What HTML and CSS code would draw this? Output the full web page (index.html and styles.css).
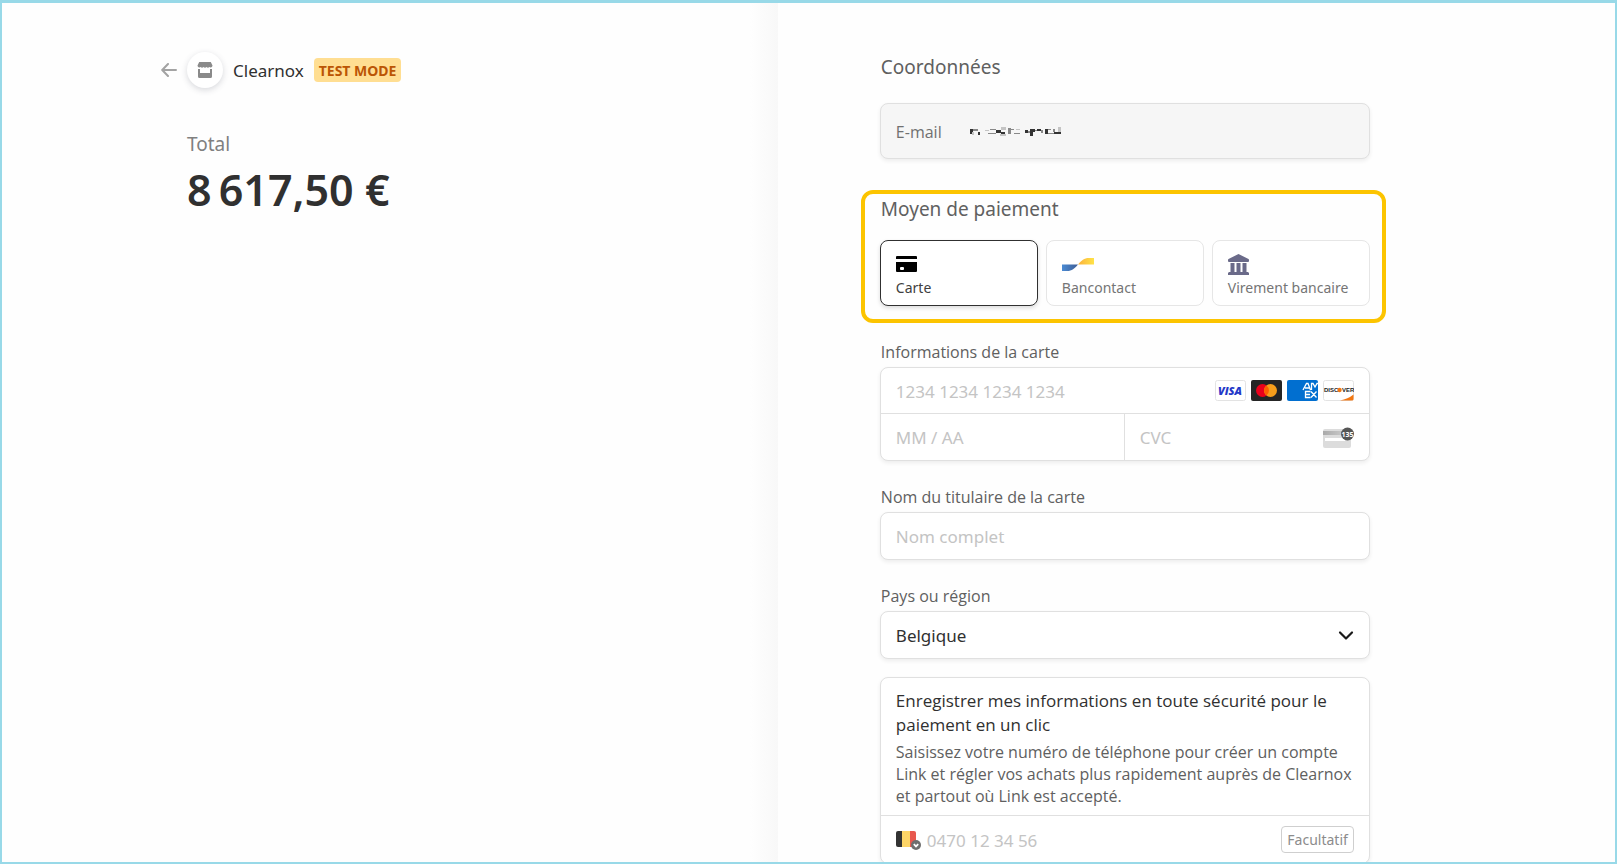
FILE: index.html
```html
<!DOCTYPE html>
<html lang="fr">
<head>
<meta charset="utf-8">
<meta name="viewport" content="width=device-width, initial-scale=1">
<title>Clearnox</title>
<link rel="stylesheet" href="styles.css">
</head>
<body>
<div class="page">
  <section class="summary">
    <header class="merchant">
      <a class="back" href="#" aria-label="Retour">
        <svg width="16" height="14" viewBox="0 0 16 14" fill="none" stroke="#a3a3a3" stroke-width="2" stroke-linecap="round" stroke-linejoin="round"><path d="M7 1 1.200 7 7 13M1.500 7H15"/></svg>
      </a>
      <span class="avatar">
        <svg width="16" height="16" viewBox="0 0 16 16" fill="#8a8a8a"><path d="M2.200 0h11.600L15.500 3.500a2 2 0 0 1-3.100 1.600 2.300 2.300 0 0 1-2.900 0 2.300 2.300 0 0 1-3 0 2.300 2.300 0 0 1-2.900 0A2 2 0 0 1 .500 3.500z"/><path d="M1 7h2v4h10V7h2v7.500a1.500 1.500 0 0 1-1.500 1.500h-11A1.500 1.500 0 0 1 1 14.500z"/></svg>
      </span>
      <span class="merchant-name">Clearnox</span>
      <span class="badge">TEST MODE</span>
    </header>
    <p class="total-label">Total</p>
    <p class="total">8&#8239;617,50&nbsp;€</p>
  </section>

  <main class="payment">
    <form class="form">
      <h2 class="heading">Coordonnées</h2>
      <div class="box email">
        <span>E-mail</span>
        <svg width="92" height="12" viewBox="0 0 92 12" role="img" aria-label="Adresse masquée">
          <g fill="#333"><path d="M0 3h3v5H0zM8 6h2v3H8zM26 4h5v3h-5zM31 6h4v2h-4zM55 4h3v3h-3zM60 3h5v3h-5zM60 6h3v4h-3zM67 3h4v2h-4zM75 3h3v5h-3zM84 6h7v2h-7z"/></g>
          <g fill="#888"><path d="M3 3h5v2H3zM20 3h6v1h-6zM18 7h8v1h-8zM38 2h3v6h-3zM41 3h3v1h-3zM44 7h6v1h-6zM58 5h2v2h-2zM65 4h2v1h-2zM71 4h2v3h-2zM78 3h3v1h-3zM78 7h6v1h-6zM83 3h2v3h-2z"/></g>
          <g fill="#c4c4c4"><path d="M2 6h2v3H2zM15 4h4v1h-4zM31 1h5v3h-5zM30 8h6v2h-6zM46 3h4v1h-4zM88 1h3v5h-3z"/></g>
        </svg>
      </div>

      <section class="methods">
        <h2 class="heading">Moyen de paiement</h2>
        <div class="tabs" role="tablist">
          <button class="tab selected" type="button" role="tab" aria-selected="true">
            <svg width="21" height="21" viewBox="0 0 21 21"><path d="M1 2h19a1 1 0 0 1 1 1v2H0V3a1 1 0 0 1 1-1zM0 8h21v9a1 1 0 0 1-1 1H1a1 1 0 0 1-1-1z"/><rect x="4" y="13" width="4" height="3" rx="1" fill="#fff"/></svg>
            <span>Carte</span>
          </button>
          <button class="tab" type="button" role="tab" aria-selected="false">
            <svg width="32" height="21" viewBox="0 0 32 21"><defs><linearGradient id="blue"><stop stop-color="#4a8bd4"/><stop offset="1" stop-color="#3f5d94"/></linearGradient><linearGradient id="yellow"><stop stop-color="#fbb13c"/><stop offset="1" stop-color="#ffe347"/></linearGradient></defs><path fill="url(#blue)" d="M0 10.500h16C12.500 14.500 10 17 5 17H0z"/><path fill="url(#yellow)" d="M16 10.500C19.500 6.500 22 4 27 4h5v6.500z"/></svg>
            <span>Bancontact</span>
          </button>
          <button class="tab" type="button" role="tab" aria-selected="false">
            <svg width="21" height="21" viewBox="0 0 21 21" fill="#6a6a89"><path d="M10.500 0 20.500 5q.500.300.500 1v1q0 1-1 1H1Q0 8 0 7V6q0-.700.500-1zM2.500 9h4v9h-4zM8.500 9h4v9h-4zM14.500 9h4v9h-4zM1 18h19l1 1v2H0v-2z"/></svg>
            <span>Virement bancaire</span>
          </button>
        </div>
      </section>

      <fieldset class="field first">
        <legend class="label">Informations de la carte</legend>
        <div class="box card">
          <div class="cell number">
            <input class="input" type="text" aria-label="Numéro de carte" placeholder="1234 1234 1234 1234">
            <div class="brands">
              <svg width="31" height="21" viewBox="0 0 31 21"><rect x=".5" y=".5" width="30" height="20" rx="2" fill="#fff" stroke="#e3e3e3"/><text class="visa" x="15" y="15" text-anchor="middle">VISA</text></svg>
              <svg width="31" height="21" viewBox="0 0 31 21"><rect width="31" height="21" rx="2" fill="#252525"/><circle cx="11.500" cy="10.500" r="6.500" fill="#eb001b"/><circle cx="19.500" cy="10.500" r="6.500" fill="#f79e1b"/><path fill="#ff5f00" d="M15.500 5.400a6.500 6.500 0 0 1 0 10.200 6.500 6.500 0 0 1 0-10.200z"/></svg>
              <svg width="31" height="21" viewBox="0 0 31 21"><rect width="31" height="21" rx="2" fill="#016fd0"/><g fill="none" stroke="#fff" stroke-width="1.300"><path d="m16 10 3.500-6.500h1.500L23.500 10M18 8h4.500M24.500 10V3.500h1.500l2 3.500 2-3.500h1M23.500 11.500h-5v6h5M18.500 14.500h4.500M24 11.500l5.500 6M29.500 11.500l-5.500 6"/></g></svg>
              <svg width="31" height="21" viewBox="0 0 31 21"><rect x=".5" y=".5" width="30" height="20" rx="2" fill="#fff" stroke="#e3e3e3"/><path fill="#f27712" d="M17 20.500q8-1.500 13.500-6v4.500q0 1.500-1.500 1.500z"/><text class="discover" x="1" y="12">DISC</text><circle cx="16.500" cy="10" r="2.200" fill="#f27712"/><text class="discover" x="19" y="12">VER</text></svg>
            </div>
          </div>
          <div class="cell expiry"><input class="input" type="text" aria-label="Expiration" placeholder="MM / AA"></div>
          <div class="cell cvc">
            <input class="input" type="text" aria-label="CVC" placeholder="CVC">
            <svg width="31" height="21" viewBox="0 0 31 21"><defs><linearGradient id="strip"><stop stop-color="#aaa"/><stop offset="1" stop-color="#d4d4d4"/></linearGradient></defs><rect y="2" width="28" height="19" rx="2" fill="#dcdcdc"/><path fill="url(#strip)" d="M0 4h28v4H0z"/><path fill="#fff" d="M2 11h20v3H2z"/><circle cx="24.500" cy="7" r="6.500" fill="#555"/><text class="digits" x="24.500" y="10" text-anchor="middle">135</text></svg>
          </div>
        </div>
      </fieldset>

      <div class="field">
        <label class="label" for="name">Nom du titulaire de la carte</label>
        <div class="box control"><input class="input" id="name" type="text" placeholder="Nom complet"></div>
      </div>

      <div class="field">
        <label class="label" for="country">Pays ou région</label>
        <div class="box control">
          <select class="input select" id="country"><option>Belgique</option></select>
          <svg width="16" height="16" viewBox="0 0 16 16" fill="none" stroke="#1a1a1a" stroke-width="2.200" stroke-linecap="round" stroke-linejoin="round"><path d="m2 5.500 6 6 6-6"/></svg>
        </div>
      </div>

      <div class="box link">
        <div class="link-text">
          <h3 class="link-title">Enregistrer mes informations en toute sécurité pour le paiement en un clic</h3>
          <p class="link-description">Saisissez votre numéro de téléphone pour créer un compte Link et régler vos achats plus rapidement auprès de Clearnox et partout où Link est accepté.</p>
        </div>
        <div class="phone">
          <button class="flag" type="button" aria-label="Belgique">
            <svg width="25" height="21" viewBox="0 0 25 21"><clipPath id="flag"><rect y="2" width="20" height="16" rx="2"/></clipPath><g clip-path="url(#flag)"><path fill="#333" d="M0 0h7v20H0z"/><path fill="#fdd567" d="M6 0h8v20H6z"/><path fill="#e8584e" d="M14 0h8v20h-8z"/></g><circle cx="20" cy="16" r="5" fill="#6e6e6e"/><path d="m17.800 15.200 2.200 2.200 2.200-2.200" fill="none" stroke="#fff" stroke-width="1.800"/></svg>
          </button>
          <input class="input" type="tel" aria-label="Téléphone" placeholder="0470 12 34 56">
          <span class="optional">Facultatif</span>
        </div>
      </div>
    </form>
  </main>
</div>
</body>
</html>
```
FILE: styles.css
```css
* {
  box-sizing: border-box;
}

body {
  margin: 0;
  background: #fefefe;
  color: #303030;
  font-family: "Noto Sans", "Open Sans", sans-serif;
}

h2, h3, p {
  margin: 0;
  font-weight: 400;
}

svg {
  display: block;
  flex: none;
}

.page {
  display: grid;
  grid-template-columns: 481fr 519fr;
  height: 100vh;
  overflow: hidden;
  border: 2px solid #98d9e8;
  border-top-width: 3px;
}

.summary {
  padding: 49px 24px 0 159px;
  background: linear-gradient(to left, #f8f8f8, #fefefe 28px);
}

.merchant {
  display: flex;
  align-items: center;
}

.avatar {
  display: grid;
  place-items: center;
  width: 36px;
  height: 36px;
  margin: 0 10px;
  border-radius: 50%;
  background: #fff;
  box-shadow: 0 2px 6px rgba(60, 66, 87, 0.2);
}

.merchant-name {
  margin-right: 10px;
  padding-top: 2px;
  font-size: 17px;
  line-height: 24px;
}

.badge {
  padding: 1px 5px 0;
  border-radius: 4px;
  background: #ffde92;
  color: #bb5504;
  font-size: 14px;
  font-weight: 700;
  line-height: 23px;
}

.total-label {
  margin: 42px 0 0 26px;
  color: #808080;
  font-size: 19px;
  line-height: 28px;
}

.total {
  margin-left: 26px;
  font-size: 43px;
  font-weight: 600;
  line-height: 64px;
}

.payment {
  padding: 50px 24px 0 102px;
}

.form {
  max-width: 490px;
}

.heading {
  padding-left: 1px;
  color: #606060;
  font-size: 19px;
  line-height: 28px;
}

.box {
  border: 1px solid #e0e0e0;
  border-radius: 8px;
  background: #fff;
  box-shadow: 0 2px 4px rgba(0, 0, 0, 0.07);
}

.email {
  display: flex;
  align-items: center;
  gap: 28px;
  height: 56px;
  margin-top: 22px;
  padding: 2px 15px 0;
  background: #f6f6f6;
  color: #707070;
  font-family: "Open Sans", "Noto Sans", sans-serif;
  font-size: 16px;
}

.methods {
  margin: 31px -16px 0 -19px;
  padding: 1px 12px 13px 15px;
  border: 4px solid #fcc400;
  border-radius: 12px;
}

.tabs {
  display: grid;
  grid-template-columns: repeat(3, 1fr);
  gap: 8px;
  margin-top: 17px;
}

.tab {
  display: flex;
  flex-direction: column;
  align-items: flex-start;
  gap: 2px;
  height: 66px;
  padding: 13px 15px 0;
  border: 1px solid #e6e6e6;
  border-radius: 8px;
  background: #fff;
  color: #757575;
  font: 14px/22px "Noto Sans", "Open Sans", sans-serif;
  white-space: nowrap;
}

.tab.selected {
  border-color: #303030;
  color: #404040;
  box-shadow: 0 2px 4px rgba(0, 0, 0, 0.14);
}

.field {
  min-width: 0;
  margin: 21px 0 0;
  padding: 0;
  border: 0;
}

.first {
  margin-top: 14px;
}

.label {
  display: block;
  padding: 0 1px;
  color: #606060;
  font-family: "Open Sans", "Noto Sans", sans-serif;
  font-size: 16px;
  line-height: 30px;
}

.card {
  display: grid;
  grid-template-columns: 1fr 1fr;
}

.cell {
  display: flex;
  align-items: center;
  min-width: 0;
  height: 46px;
  padding: 0 15px;
}

.number {
  grid-column: 1 / 3;
  border-bottom: 1px solid #e0e0e0;
}

.expiry {
  border-right: 1px solid #e0e0e0;
}

.brands {
  display: flex;
  gap: 5px;
}

.input {
  flex: 1;
  min-width: 0;
  height: 44px;
  padding: 1px 0 0;
  border: 0;
  outline: 0;
  background: transparent;
  color: #303030;
  font: 17px "Noto Sans", "Open Sans", sans-serif;
}

.input::placeholder {
  color: #c4c4c4;
  opacity: 1;
}

.select {
  appearance: none;
}

.control {
  display: flex;
  align-items: center;
  height: 48px;
  padding: 0 15px;
}

.link {
  margin-top: 18px;
}

.link-text {
  padding: 11px 8px 8px 15px;
  font-family: "Open Sans", "Noto Sans", sans-serif;
}

.link-title {
  font-size: 17px;
  line-height: 24px;
}

.link-description {
  margin-top: 4px;
  color: #606060;
  font-size: 16px;
  line-height: 22px;
}

.phone {
  display: flex;
  align-items: center;
  gap: 6px;
  height: 48px;
  padding: 0 15px;
  border-top: 1px solid #e0e0e0;
}

.flag {
  padding: 0;
  border: 0;
  background: none;
}

.optional {
  padding: 0 5px;
  border: 1px solid #cfcfcf;
  border-radius: 4px;
  color: #8c8c8c;
  font-size: 14px;
  line-height: 25px;
}

.visa {
  fill: #2438c8;
  font: italic 800 11px "Open Sans", sans-serif;
}

.discover {
  fill: #222;
  font: 800 6px "Liberation Sans", sans-serif;
}

.digits {
  fill: #fff;
  font: 700 7px "Open Sans", sans-serif;
}
```
